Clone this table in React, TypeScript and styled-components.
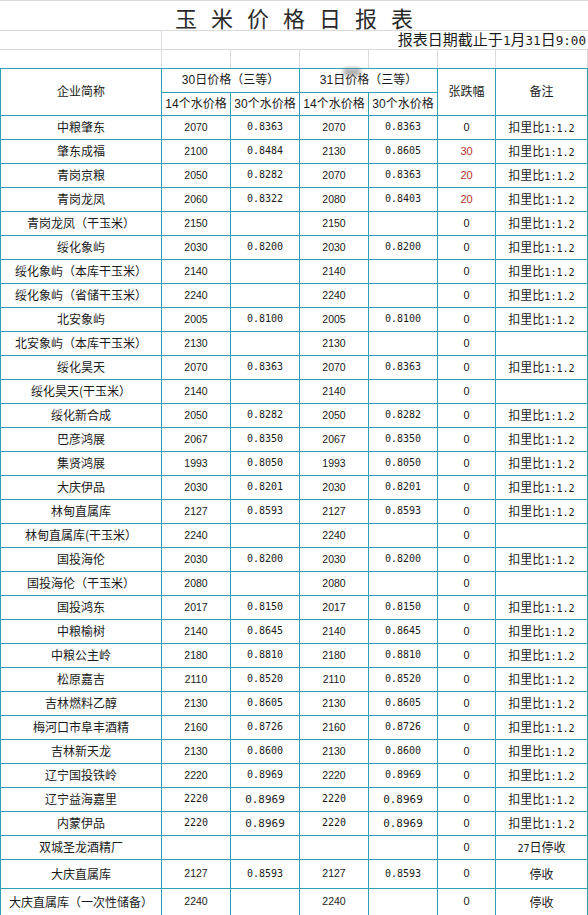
import React from "react";
import styled, { createGlobalStyle, css } from "styled-components";

const TEAL = "#2ba1b1";
const GRID = "#dadada";
const MONO = `"DejaVu Sans Mono", "Liberation Mono", monospace`;

const GlobalStyle = createGlobalStyle`
  html, body {
    margin: 0;
    padding: 0;
    background: #fff;
  }
  body {
    font-family: "Noto Sans CJK SC", sans-serif;
    color: #1a1a1a;
  }
`;

const Sheet = styled.table`
  width: 588px;
  table-layout: fixed;
  border-collapse: separate;
  border-spacing: 0;
`;

const Row = styled.tr<{ $h: number }>`
  height: ${(p) => p.$h}px;
`;

const Half = styled.span`
  font-family: ${MONO};
  font-size: 0.84em;
`;

// latin runs get the narrow half-width look of the sheet's Song font
const mix = (s: string) =>
  s
    .split(/([\x20-\x7e]+)/)
    .filter(Boolean)
    .map((part, i) =>
      /^[\x20-\x7e]+$/.test(part) ? <Half key={i}>{part}</Half> : part
    );

const GridCell = styled.td`
  padding: 0;
  border-right: 1px solid ${GRID};
`;

const TitleCell = styled.td`
  padding: 3px 0 0 14px;
  border-top: 1px solid ${GRID};
  border-bottom: 1px solid ${GRID};
  text-align: center;
  vertical-align: middle;
  font-family: "Noto Sans CJK SC", sans-serif;
  font-size: 22px;
  line-height: 1;
  letter-spacing: 14px;
  color: #2a2a2a;
`;

const DateCell = styled.td`
  padding: 0 2px 1px 0;
  border-bottom: 1px solid ${GRID};
  text-align: right;
  vertical-align: bottom;
  font-family: "Noto Sans CJK SC", sans-serif;
  font-size: 15px;
  line-height: 1;
  white-space: nowrap;
  color: #1a1a1a;
`;

const SpacerCell = styled(GridCell)`
  border-bottom: 1px solid ${GRID};
`;

const HeadCell = styled.td<{ $top?: boolean; $first?: boolean }>`
  padding: 0;
  border-right: 1px solid ${TEAL};
  border-bottom: 1px solid ${TEAL};
  ${(p) => p.$top && css`border-top: 1px solid ${TEAL};`}
  ${(p) => p.$first && css`border-left: 1px solid ${TEAL};`}
  text-align: center;
  vertical-align: middle;
  font-family: "Liberation Sans", "Noto Sans CJK SC", sans-serif;
  font-size: 12px;
  line-height: 1;
  white-space: nowrap;
  color: #1a1a1a;
`;

const Smudge = styled.span`
  position: relative;
  &::after {
    content: "";
    position: absolute;
    left: -2px;
    top: -5px;
    width: 18px;
    height: 8px;
    border-radius: 4px;
    background: rgba(110, 110, 110, 0.55);
    filter: blur(2px);
  }
`;

type Kind = "name" | "int" | "dec" | "change" | "note";

const cellFont = (kind: Kind, big?: boolean) => {
  switch (kind) {
    case "int":
      return big
        ? css`font-family: ${MONO}; font-size: 10px;`
        : css`font-family: "Liberation Sans", sans-serif; font-size: 10.5px;`;
    case "dec":
      return big
        ? css`font-family: ${MONO}; font-size: 11px;`
        : css`font-family: ${MONO}; font-size: 10px;`;
    case "change":
      return css`font-family: "Liberation Sans", sans-serif; font-size: 11px;`;
    default:
      return css`font-family: "Noto Sans CJK SC", sans-serif; font-size: 12px;`;
  }
};

const Cell = styled.td<{ $kind: Kind; $first?: boolean; $red?: boolean; $big?: boolean }>`
  padding: 0;
  border-right: 1px solid ${TEAL};
  border-bottom: 1px solid ${TEAL};
  ${(p) => p.$first && css`border-left: 1px solid ${TEAL};`}
  text-align: center;
  vertical-align: middle;
  line-height: 1;
  white-space: nowrap;
  overflow: hidden;
  color: ${(p) => (p.$red ? "#b3302e" : "#1a1a1a")};
  ${(p) => cellFont(p.$kind, p.$big)}
`;

type Entry = {
  name: string;
  a14: string;
  a30: string;
  b14: string;
  b30: string;
  diff: string;
  note: string;
  big?: boolean;
  h?: number;
};

const R = "扣里比1:1.2";

const e = (
  name: string,
  a14: string,
  a30: string,
  b14: string,
  b30: string,
  diff: string,
  note: string,
  extra: Partial<Entry> = {}
): Entry => ({ name, a14, a30, b14, b30, diff, note, ...extra });

const rows: Entry[] = [
  e("中粮肇东", "2070", "0.8363", "2070", "0.8363", "0", R),
  e("肇东成福", "2100", "0.8484", "2130", "0.8605", "30", R),
  e("青岗京粮", "2050", "0.8282", "2070", "0.8363", "20", R),
  e("青岗龙凤", "2060", "0.8322", "2080", "0.8403", "20", R),
  e("青岗龙凤（干玉米）", "2150", "", "2150", "", "0", R),
  e("绥化象屿", "2030", "0.8200", "2030", "0.8200", "0", R),
  e("绥化象屿（本库干玉米）", "2140", "", "2140", "", "0", R),
  e("绥化象屿（省储干玉米）", "2240", "", "2240", "", "0", R),
  e("北安象屿", "2005", "0.8100", "2005", "0.8100", "0", R),
  e("北安象屿（本库干玉米）", "2130", "", "2130", "", "0", ""),
  e("绥化昊天", "2070", "0.8363", "2070", "0.8363", "0", R),
  e("绥化昊天(干玉米）", "2140", "", "2140", "", "0", ""),
  e("绥化新合成", "2050", "0.8282", "2050", "0.8282", "0", R),
  e("巴彦鸿展", "2067", "0.8350", "2067", "0.8350", "0", R),
  e("集贤鸿展", "1993", "0.8050", "1993", "0.8050", "0", R),
  e("大庆伊品", "2030", "0.8201", "2030", "0.8201", "0", R),
  e("林甸直属库", "2127", "0.8593", "2127", "0.8593", "0", R),
  e("林甸直属库(干玉米）", "2240", "", "2240", "", "0", ""),
  e("国投海伦", "2030", "0.8200", "2030", "0.8200", "0", R),
  e("国投海伦（干玉米）", "2080", "", "2080", "", "0", ""),
  e("国投鸿东", "2017", "0.8150", "2017", "0.8150", "0", R),
  e("中粮榆树", "2140", "0.8645", "2140", "0.8645", "0", R),
  e("中粮公主岭", "2180", "0.8810", "2180", "0.8810", "0", R),
  e("松原嘉吉", "2110", "0.8520", "2110", "0.8520", "0", R),
  e("吉林燃料乙醇", "2130", "0.8605", "2130", "0.8605", "0", R),
  e("梅河口市阜丰酒精", "2160", "0.8726", "2160", "0.8726", "0", R),
  e("吉林新天龙", "2130", "0.8600", "2130", "0.8600", "0", R),
  e("辽宁国投铁岭", "2220", "0.8969", "2220", "0.8969", "0", R),
  e("辽宁益海嘉里", "2220", "0.8969", "2220", "0.8969", "0", R, { big: true }),
  e("内蒙伊品", "2220", "0.8969", "2220", "0.8969", "0", R, { big: true }),
  e("双城圣龙酒精厂", "", "", "", "", "0", "27日停收"),
  e("大庆直属库", "2127", "0.8593", "2127", "0.8593", "0", "停收", { h: 29 }),
  e("大庆直属库（一次性储备）", "2240", "", "2240", "", "0", "停收", { h: 27 }),
];

const widths = [162, 69, 69, 69, 69, 58, 92];

export default function App() {
  return (
    <>
      <GlobalStyle />
      <Sheet>
        <colgroup>
          {widths.map((w, i) => (
            <col key={i} style={{ width: w }} />
          ))}
        </colgroup>
        <tbody>
          <Row $h={31}>
            <TitleCell colSpan={7}>玉米价格日报表</TitleCell>
          </Row>
          <Row $h={18}>
            <SpacerCell />
            <DateCell colSpan={6}>{mix("报表日期截止于1月31日9:00")}</DateCell>
          </Row>
          <Row $h={18}>
            {widths.map((_, i) => (
              <GridCell key={i} />
            ))}
          </Row>
          <Row $h={25}>
            <HeadCell $top $first rowSpan={2}>
              企业简称
            </HeadCell>
            <HeadCell $top colSpan={2}>
              30日价格（三等）
            </HeadCell>
            <HeadCell $top colSpan={2}>
              31日<Smudge>价</Smudge>格（三等）
            </HeadCell>
            <HeadCell $top rowSpan={2}>
              张跌幅
            </HeadCell>
            <HeadCell $top rowSpan={2}>
              备注
            </HeadCell>
          </Row>
          <Row $h={23}>
            <HeadCell>14个水价格</HeadCell>
            <HeadCell>30个水价格</HeadCell>
            <HeadCell>14个水价格</HeadCell>
            <HeadCell>30个水价格</HeadCell>
          </Row>
          {rows.map((r) => (
            <Row key={r.name} $h={r.h ?? 24}>
              <Cell $kind="name" $first>
                {r.name}
              </Cell>
              <Cell $kind="int" $big={r.big}>{r.a14}</Cell>
              <Cell $kind="dec" $big={r.big}>{r.a30}</Cell>
              <Cell $kind="int" $big={r.big}>{r.b14}</Cell>
              <Cell $kind="dec" $big={r.big}>{r.b30}</Cell>
              <Cell $kind="change" $red={r.diff !== "0"}>
                {r.diff}
              </Cell>
              <Cell $kind="note">{mix(r.note)}</Cell>
            </Row>
          ))}
        </tbody>
      </Sheet>
    </>
  );
}
